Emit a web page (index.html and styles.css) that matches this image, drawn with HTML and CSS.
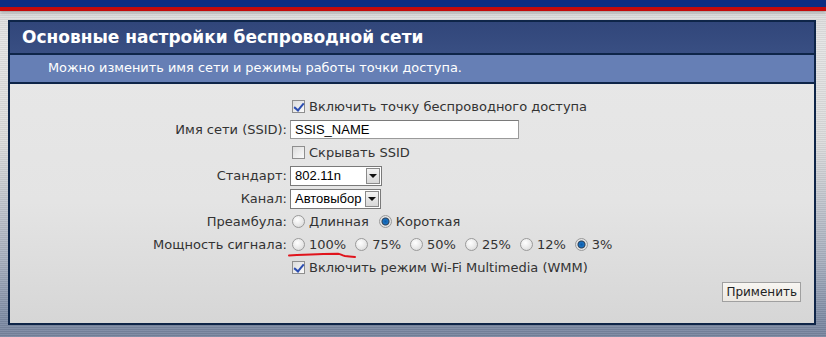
FILE: index.html
```html
<!DOCTYPE html>
<html lang="ru">
  <head>
    <meta charset="utf-8">
    <title>Основные настройки беспроводной сети</title>
    <link rel="stylesheet" href="styles.css">
  </head>
  <body>
    <div class="topbar"></div>
    <section class="panel">
      <h1 class="panel-title">Основные настройки беспроводной сети</h1>
      <div class="panel-hint">Можно изменить имя сети и режимы работы точки доступа.</div>
      <form class="panel-body">
        <div class="form-grid">
          <span></span>
          <label class="check"><input type="checkbox" checked> Включить точку беспроводного доступа</label>

          <label class="name" for="ssid">Имя сети (SSID):</label>
          <div><input type="text" id="ssid" class="text" value="SSIS_NAME"></div>

          <span></span>
          <label class="check"><input type="checkbox"> Скрывать SSID</label>

          <label class="name">Стандарт:</label>
          <div><span class="select std">802.11n<i class="arrow"></i></span></div>

          <label class="name">Канал:</label>
          <div><span class="select chan">Автовыбор<i class="arrow"></i></span></div>

          <label class="name">Преамбула:</label>
          <div class="radios">
            <label><input type="radio" name="pre"> Длинная</label>
            <label><input type="radio" name="pre" checked> Короткая</label>
          </div>

          <label class="name">Мощность сигнала:</label>
          <div class="radios power">
            <label><input type="radio" name="pw"> 100%</label>
            <label><input type="radio" name="pw"> 75%</label>
            <label><input type="radio" name="pw"> 50%</label>
            <label><input type="radio" name="pw"> 25%</label>
            <label><input type="radio" name="pw"> 12%</label>
            <label><input type="radio" name="pw" checked> 3%</label>
            <svg class="mark" width="72" height="9" viewBox="0 0 72 9">
              <path d="M1 4.5 C 18 3.6, 36 2.8, 50 2.8 C 53 3.2, 54 4.4, 57 5 C 61 5.6, 64 5.8, 67 6" fill="none" stroke="#e0141c" stroke-width="2" stroke-linecap="round"/>
            </svg>
          </div>

          <span></span>
          <label class="check"><input type="checkbox" checked> Включить режим Wi-Fi Multimedia (WMM)</label>
        </div>
        <div class="actions">
          <button type="button" class="apply">Применить</button>
        </div>
      </form>
    </section>
  </body>
</html>
```

FILE: styles.css
```css
html, body {
  margin: 0;
  height: 100%;
}

body {
  font-family: "DejaVu Sans", Tahoma, sans-serif;
  font-size: 13px;
  color: #222;
  background:
    repeating-linear-gradient(to bottom, rgba(255,255,255,0.08) 0 1px, rgba(0,0,0,0.05) 1px 2px),
    linear-gradient(to bottom, #d8d8d8 0, #e4e4e4 40px, #dcdcdc 140px, #a8b0bf 260px, #7d8ba4 320px, #76849e 100%);
  overflow: hidden;
}

.topbar {
  height: 7px;
  background: #0c2d82;
  border-bottom: 4px solid #c40a0a;
  box-shadow: 0 2px 3px rgba(0,0,0,0.2);
}

.panel {
  margin: 9px 10px 0 8px;
  border: 2px solid #0e2548;
  background: linear-gradient(to bottom, #e8e8e8 0, #e4e4e4 180px, #d6d6d6 100%);
}

.panel-title {
  margin: 0;
  height: 31px;
  line-height: 31px;
  padding-left: 12px;
  font-size: 17px;
  font-weight: bold;
  color: #fff;
  background: linear-gradient(to bottom, #31467a, #394f83);
  border-bottom: 2px solid #0e2548;
}

.panel-hint {
  height: 27px;
  line-height: 26px;
  padding-left: 38px;
  font-size: 12.9px;
  color: #fff;
  background: #667fb5;
  border-bottom: 2px solid #0e2548;
}

.panel-body {
  padding: 11px 0 21px 0;
}

.form-grid {
  display: grid;
  grid-template-columns: 277px 1fr;
  column-gap: 3px;
  grid-auto-rows: 23px;
  align-items: center;
}

.name {
  text-align: right;
  color: #333;
}

.check, .radios label {
  display: inline-flex;
  align-items: center;
  gap: 3px;
  color: #333;
}

input[type=checkbox] {
  appearance: none;
  margin: 0 1px 0 2px;
  width: 13px;
  height: 13px;
  border: 1px solid #8e8e8e;
  background: linear-gradient(135deg, #dcdcdc, #fafafa);
  position: relative;
}

input[type=checkbox]:checked::after {
  content: "";
  position: absolute;
  left: 3px;
  top: 0;
  width: 4px;
  height: 8px;
  border: solid #2b4db0;
  border-width: 0 2px 2px 0;
  transform: rotate(40deg);
}

input[type=radio] {
  appearance: none;
  margin: 0 1px 0 2px;
  width: 13px;
  height: 13px;
  border-radius: 50%;
  border: 1px solid #9a9a9a;
  background: radial-gradient(circle at 40% 35%, #fff 0, #e6e6e6 60%, #cfcfcf 100%);
  position: relative;
}

input[type=radio]:checked {
  background: radial-gradient(circle at 50% 50%, #0d5aa8 0, #1b74c4 2.5px, #2d3f55 3.5px, #e6e6e6 4.5px, #d2d2d2 100%);
}

.radios {
  display: flex;
  align-items: center;
  gap: 8px;
  position: relative;
}

.radios.power {
  gap: 7px;
}

.mark {
  position: absolute;
  left: -2px;
  top: 14px;
}

.text {
  box-sizing: border-box;
  width: 229px;
  height: 19px;
  border: 1px solid #9a9a9a;
  border-top-color: #7a7a7a;
  padding: 0 4px;
  font-family: "Liberation Sans", Arial, sans-serif;
  font-size: 13px;
  color: #000;
  background: #fff;
}

.select {
  box-sizing: border-box;
  display: inline-flex;
  align-items: center;
  height: 20px;
  padding-left: 4px;
  border: 1px solid #7a7a7a;
  background: #fff;
  font-family: "Liberation Sans", Arial, sans-serif;
  font-size: 13px;
  color: #000;
  position: relative;
}

.select.std {
  width: 92px;
}

.select.chan {
  width: 91px;
}

.arrow {
  position: absolute;
  right: 1px;
  top: 1px;
  width: 14px;
  height: 16px;
  box-sizing: border-box;
  border: 1px solid #8a8a8a;
  background: linear-gradient(to bottom, #f4f4f4, #d8d8d8);
}

.arrow::after {
  content: "";
  position: absolute;
  left: 2px;
  top: 5px;
  border-left: 4px solid transparent;
  border-right: 4px solid transparent;
  border-top: 4px solid #111;
}

.actions {
  display: flex;
  justify-content: flex-end;
  padding-right: 13px;
  margin-top: 3px;
}

.apply {
  height: 20px;
  padding: 0 3px;
  font-family: "DejaVu Sans", Tahoma, sans-serif;
  font-size: 12px;
  color: #222;
  border: 1px solid #a0a0a0;
  background: linear-gradient(to bottom, #f8f6f2, #ece8e2);
  border-radius: 0;
}
```
